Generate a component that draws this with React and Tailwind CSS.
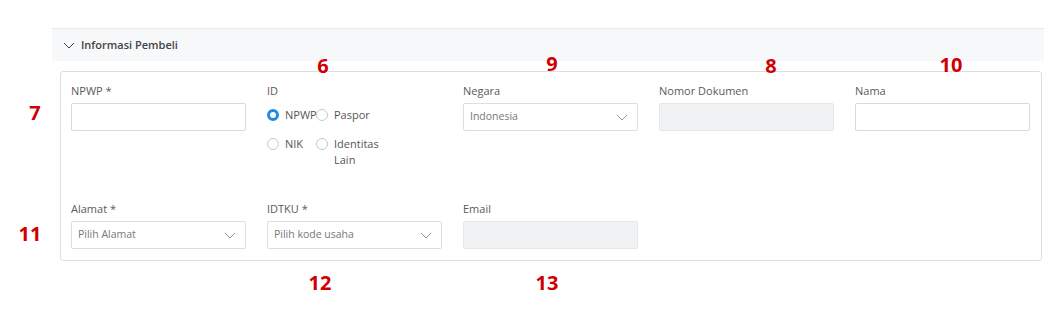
import React from "react";

const font = { fontFamily: '"Open Sans", "Liberation Sans", sans-serif' };

const Chevron = ({ className = "" }) => (
    <svg width="12" height="7" viewBox="0 0 12 7" fill="none" className={className}>
        <path d="M1 1l5 5 5-5" stroke="currentColor" strokeWidth="1" />
    </svg>
);

const Label = ({ children }) => (
    <div className="h-[16px] leading-[16px] text-[11px] text-[#5a5a5a] mb-[4px]">{children}</div>
);

const TextInput = ({ label, disabled }) => (
    <div className="w-[175px]">
        <Label>{label}</Label>
        <div
            className={`h-[28px] rounded-[2px] border ${
                disabled ? "bg-[#f1f2f3] border-[#e6e7e8]" : "bg-white border-[#d9d9d9]"
            }`}
        ></div>
    </div>
);

const SelectInput = ({ label, placeholder }) => (
    <div className="w-[175px]">
        <Label>{label}</Label>
        <div className="h-[28px] rounded-[2px] border border-[#dedede] bg-white flex items-center justify-between pl-[6px] pr-[9px]">
            <span className="text-[10.5px] text-[#777]">{placeholder}</span>
            <Chevron className="text-[#999]" />
        </div>
    </div>
);

const Radio = ({ label, checked }) => (
    <div className="flex items-start gap-[6px]">
        <span
            className={`mt-[2px] w-[12px] h-[12px] shrink-0 rounded-full bg-white ${
                checked ? "border-[3px] border-[#2189e6]" : "border border-[#c8c8c8]"
            }`}
        ></span>
        <span className="text-[11px] leading-[16px] text-[#555]">{label}</span>
    </div>
);

const Marker = ({ n, className }) => (
    <span className={`absolute text-[20px] font-bold leading-none text-[#d00000] -translate-x-1/2 -translate-y-1/2 ${className}`}>
        {n}
    </span>
);

export default function App() {
    return (
        <div className="relative w-[1048px] h-[311px] bg-white pt-[28px]" style={font}>
            <div className="ml-[52px] w-[992px]">
                <div className="h-[33px] bg-[#f7f8f9] border-t border-[#e8eaec] flex items-center pl-[11px] gap-[6px]">
                    <Chevron className="text-[#444]" />
                    <span className="text-[11px] font-semibold text-[#444]">Informasi Pembeli</span>
                </div>
                <div className="mt-[10px] ml-[8px] w-[982px] h-[190px] border border-[#dedede] rounded-[3px] px-[10px] pt-[11px]">
                    <div className="grid grid-cols-[repeat(5,175px)] gap-x-[21px] gap-y-[33px]">
                        <TextInput label="NPWP *" />
                        <div>
                            <Label>ID</Label>
                            <div className="grid grid-cols-[49px_66px] gap-y-[13px] pt-[4px]">
                                <Radio label="NPWP" checked />
                                <Radio label="Paspor" />
                                <Radio label="NIK" />
                                <Radio label="Identitas Lain" />
                            </div>
                        </div>
                        <SelectInput label="Negara" placeholder="Indonesia" />
                        <TextInput label="Nomor Dokumen" disabled />
                        <TextInput label="Nama" />
                        <SelectInput label="Alamat *" placeholder="Pilih Alamat" />
                        <SelectInput label="IDTKU *" placeholder="Pilih kode usaha" />
                        <TextInput label="Email" disabled />
                    </div>
                </div>
            </div>

            <Marker n="6" className="left-[323px] top-[66px]" />
            <Marker n="9" className="left-[552px] top-[64px]" />
            <Marker n="8" className="left-[771px] top-[66px]" />
            <Marker n="10" className="left-[951px] top-[65px]" />
            <Marker n="7" className="left-[35px] top-[113px]" />
            <Marker n="11" className="left-[30px] top-[234px]" />
            <Marker n="12" className="left-[320px] top-[283px]" />
            <Marker n="13" className="left-[547px] top-[283px]" />
        </div>
    );
}
